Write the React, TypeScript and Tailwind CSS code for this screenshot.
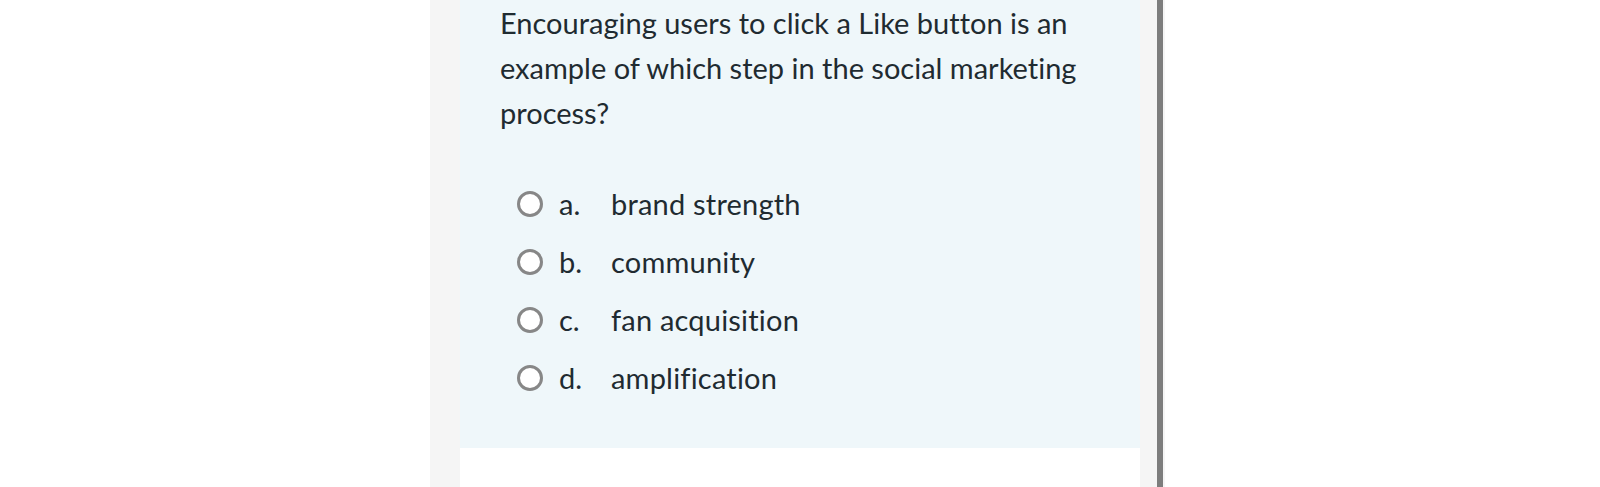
import React from 'react'

// Quiz question card — one multiple choice question with four radio options

const options: { key: string; label: React.ReactNode }[] = [
  { key: 'a.', label: 'brand strength' },
  { key: 'b.', label: 'community' },
  { key: 'c.', label: 'fan acquisition' },
  {
    key: 'd.',
    label: (
      <>
        ampli<span className="[font-variant-ligatures:common-ligatures]">fi</span>cation
      </>
    ),
  },
]

export default function App() {
  return (
    <div className="w-[1600px] h-[487px] bg-white overflow-hidden flex font-['Lato','Liberation_Sans',sans-serif] text-[#1f2b31] [font-variant-ligatures:none]">
      <div className="ml-[430px] h-full flex bg-[#f5f5f5]">
        {/* --- Question panel --- */}
        <div className="ml-[30px] w-[680px] h-full flex flex-col">
          <div className="bg-[#eff7fa] pl-[40px] pr-[30px] pb-[41px]">
            <p className="text-[29px] leading-[45px] w-[605px]">
              Encouraging users to click a Like button is an example of which step in the social marketing process?
            </p>

            <div className="mt-[40px] flex flex-col pl-[17px]">
              {options.map((o) => (
                <label key={o.key} className="h-[58px] flex items-center cursor-pointer">
                  <span className="w-[26px] h-[26px] rounded-full border-[3px] border-[#878787] bg-white shrink-0" />
                  <span className="ml-[16px] w-[52px] text-[29px]">{o.key}</span>
                  <span className="text-[29px] tracking-[0.2px]">{o.label}</span>
                </label>
              ))}
            </div>
          </div>
          <div className="flex-1 bg-white" />
        </div>

        {/* --- Scroll divider --- */}
        <div className="w-[17px]" />
        <div className="w-[6px] h-full bg-[#7d7d7d]" />
        <div className="w-[2px] h-full bg-[#f5f5f5]" />
      </div>
    </div>
  )
}
